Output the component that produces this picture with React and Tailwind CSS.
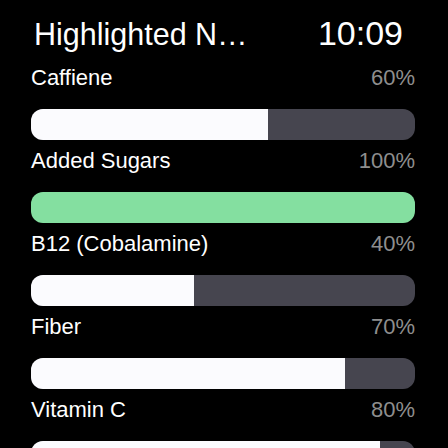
const nutrients = [
  { name: "Caffiene", pct: "60%", fill: 237 },
  { name: "Added Sugars", pct: "100%", fill: 384, green: true },
  { name: "B12 (Cobalamine)", pct: "40%", fill: 163 },
  { name: "Fiber", pct: "70%", fill: 314 },
  { name: "Vitamin C", pct: "80%", fill: 349 },
];

function NutrientRow({ item }) {
  return (
    <div className="flex flex-col mb-[8px]">
      <div className="flex justify-between items-center h-[26px] text-[22px] leading-[26px]">
        <span className="text-white">{item.name}</span>
        <span className="text-[#8e8e8e]">{item.pct}</span>
      </div>
      <div className="mt-[18px] h-[31px] w-[384px] rounded-[12px] bg-[#46454f] overflow-hidden flex">
        <div
          className={item.green ? "h-full bg-[#84dfa0]" : "h-full bg-[#fbfbfe]"}
          style={{ width: item.fill }}
        />
      </div>
    </div>
  );
}

export default function App() {
  return (
    <div className="w-[448px] h-[448px] bg-black overflow-hidden font-['Liberation_Sans',Arial,sans-serif]">
      <div className="flex justify-between items-baseline pt-[15px] pl-[34px] pr-[45px] h-[51px]">
        <span className="text-white text-[30.5px] leading-[36px]">Highlighted N…</span>
        <span className="text-white text-[34px] leading-[36px]">10:09</span>
      </div>
      <div className="mt-[14px] pl-[31px] pr-[33px]">
        {nutrients.map((n) => (
          <NutrientRow key={n.name} item={n} />
        ))}
      </div>
    </div>
  );
}
